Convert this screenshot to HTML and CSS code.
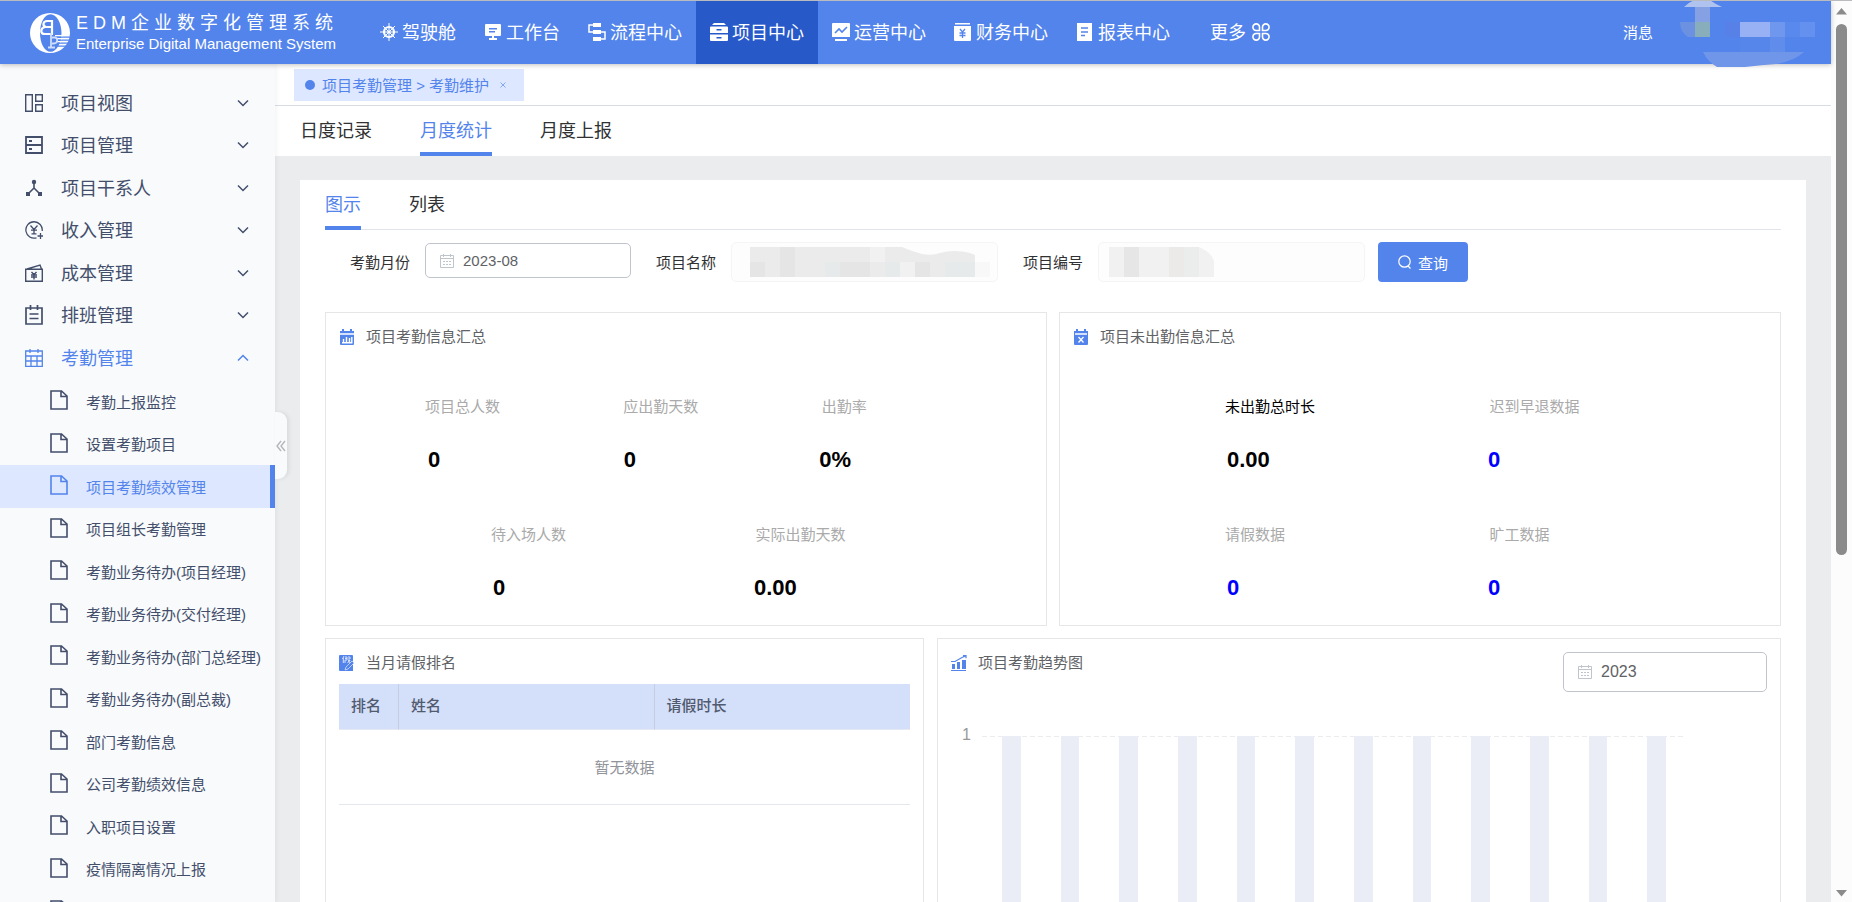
FILE: index.html
```html
<!DOCTYPE html>
<html lang="zh-CN">
<head>
<meta charset="utf-8">
<title>EDM企业数字化管理系统</title>
<link rel="stylesheet" href="styles.css">
</head>
<body>
<svg class="sprite" aria-hidden="true">
  <symbol id="doc" viewBox="0 0 18 20"><path d="M1 1h10.500L17 6v13H1z M11 1v5.500h6" fill="none" stroke="currentColor" stroke-width="1.600"/></symbol>
  <symbol id="down" viewBox="0 0 12 12"><path d="M1 3.500l5 5 5-5" fill="none" stroke="currentColor" stroke-width="1.500"/></symbol>
  <symbol id="cal" viewBox="0 0 14 14"><path d="M.5 1.500h13v12H.5z M.5 4.500h13 M3.500 0v3 M10.500 0v3" fill="none" stroke="currentColor"/><path d="M3 7.500h8 M3 10.500h8" stroke="currentColor" stroke-dasharray="2 1"/></symbol>
</svg>
<div class="app">
  <header class="topbar">
    <a class="brand" href="#">
      <svg class="logo" viewBox="0 0 40 40" aria-hidden="true">
        <path fill="#fff" fill-rule="evenodd" d="M20 0a20 20 0 1 1 0 40a20 20 0 1 1 0-40z M20.500 1.200c-6 0-10.500 8.500-10.500 18.800s4.500 18.800 10.500 18.800S31.500 30.300 31.500 20 26.500 1.200 20.500 1.200z"/>
        <path stroke="#5384ec" stroke-width="1.300" d="M31 24.200h9M30 27.200h10M29 30.200h9M28 33.200h8"/>
        <path stroke="#fff" stroke-width="1.200" d="M25 22.700h8M26 25.700h6M26 28.700h5"/>
        <path fill="none" stroke="#fff" stroke-width="2.200" d="M22 7v14M23 8h-6c-4 0-5 5-1 6h6M15 14c-5 1-5 7 0 7h8"/>
        <path fill="none" stroke="#cfdefb" stroke-width="1.800" d="M21 20v14M18 34.500h7M22 24.500h3c3 0 3 6-1 6h-2"/>
      </svg>
      <span class="brand-text">
        <span class="brand-cn">EDM企业数字化管理系统</span>
        <span class="brand-en">Enterprise Digital Management System</span>
      </span>
    </a>
    <nav class="nav">
      <a href="#"><svg viewBox="0 0 18 18"><circle cx="9" cy="9" r="5" fill="none" stroke="#fff" stroke-width="2.200"/><circle cx="9" cy="9" r="1.600" fill="#fff"/><path stroke="#fff" d="M9 0v18M0 9h18M3 3l12 12M15 3L3 15" stroke-width="1"/></svg>驾驶舱</a>
      <a href="#"><svg viewBox="0 0 18 18"><path fill="#fff" fill-rule="evenodd" d="M2 1h14q1 0 1 1v10q0 1-1 1h-6v2h3v2H5v-2h3v-2H2q-1 0-1-1V2q0-1 1-1z M5 5v1.500h8V5z M5 8v1.500h6V8z"/></svg>工作台</a>
      <a href="#"><svg viewBox="0 0 18 18"><path fill="#fff" d="M5 0h8v4H5zM5 7h8v4H5zM5 14h8v4H5z"/><path fill="none" stroke="#fff" stroke-width="1.500" d="M5 2H1v7h4M13 9h4v7h-4"/></svg>流程中心</a>
      <a href="#" class="active"><svg viewBox="0 0 18 18"><path fill="#fff" fill-rule="evenodd" d="M4 0h10l2 2H2z M1 3.500h16q1 0 1 1V10H0V4.500q0-1 1-1z M6.500 6v1.500h5V6z M0 11.500h18V17q0 1-1 1H1q-1 0-1-1z M6.500 14v1.500h5V14z"/></svg>项目中心</a>
      <a href="#"><svg viewBox="0 0 18 18"><path fill="#fff" d="M1 0h16q1 0 1 1v13H0V1q0-1 1-1zM3 16h12v2H3z"/><path fill="none" stroke="#5384ec" stroke-width="1.600" d="M3 10l4-4 3 3 5-5"/></svg>运营中心</a>
      <a href="#"><svg viewBox="0 0 18 18"><path fill="#fff" d="M1 0h15v1.500H1zM0 3h17v14q0 1-1 1H1q-1 0-1-1z"/><path fill="none" stroke="#5384ec" stroke-width="1.300" d="M6 6l2.500 3L11 6M8.500 9v6M5.500 10h6M5.500 12.500h6"/></svg>财务中心</a>
      <a href="#"><svg viewBox="0 0 18 18"><path fill="#fff" d="M1 0h15v18H1z"/><path stroke="#5384ec" stroke-width="1.400" d="M5 5h7M5 9h7M5 12.500h4"/></svg>报表中心</a>
      <a href="#" class="more">更多<svg viewBox="0 0 18 18"><path fill="none" stroke="#fff" stroke-width="1.600" d="M7.500 7.500H4.300A3.300 3.300 0 1 1 7.500 4.300zM10.500 7.500h3.200a3.300 3.300 0 1 0-3.200-3.200zM7.500 10.500H4.300a3.300 3.300 0 1 0 3.200 3.200zM10.500 10.500h3.200a3.300 3.300 0 1 1-3.200 3.200z"/></svg></a>
    </nav>
    <a class="msg" href="#">消息</a>
    <svg class="user" viewBox="0 0 138 68" role="img" aria-label="用户">
      <path fill="#b0c3ee" d="M4 7q6-6 12-7h14q5 4 12 7z"/>
      <path fill="#85a0e3" d="M15 7h15v15H15z"/><path fill="#6c91e0" d="M0 22h15v15H8Q0 32 0 22z"/><path fill="#88aebb" d="M15 22h15v15H15z"/>
      <path fill="#5781e6" d="M45 22h15v15H45z"/><path fill="#97b1f4" d="M60 22h30v15H60z"/><path fill="#7097ee" d="M90 22h15v15H90z"/><path fill="#5a89ee" d="M105 22h15v15h-15z"/><path fill="#6491ef" d="M120 22h15v15h-15z"/>
      <path fill="#5786eb" d="M60 37h30v15H60z"/><path fill="#608dec" d="M90 37h15v15H90z"/>
      <path fill="#7096ea" d="M23 52h101q-10 9-28 12-14 1-31 3H37q-9-5-14-15z"/>
    </svg>
  </header>
  <div class="body">
    <aside class="side">
      <ul class="menu">
        <li><a href="#"><svg viewBox="0 0 18 18"><path fill="none" stroke="currentColor" stroke-width="1.400" d="M.7.7h6.600v16.600H.7zM10.700.7h6.600v6.600h-6.600zM10.700 10.700h6.600v6.600h-6.600z"/></svg><span>项目视图</span><svg class="chev"><use href="#down"/></svg></a></li>
        <li><a href="#"><svg viewBox="0 0 18 18"><path fill="none" stroke="currentColor" stroke-width="1.800" d="M1 1h16v16H1zM1 9h16M4 5h3M4 13h3"/></svg><span>项目管理</span><svg class="chev"><use href="#down"/></svg></a></li>
        <li><a href="#"><svg viewBox="0 0 18 18"><path fill="none" stroke="currentColor" stroke-width="1.600" d="M9 3v6L3 15M9 9l6 6"/><circle cx="9" cy="3" r="2.200" fill="currentColor"/><path fill="currentColor" d="M1 13h4v4H1zM13 13h4v4h-4z"/></svg><span>项目干系人</span><svg class="chev"><use href="#down"/></svg></a></li>
        <li><a href="#"><svg viewBox="0 0 18 18"><path fill="none" stroke="currentColor" stroke-width="1.300" d="M11.500 16.800A8.200 8.200 0 1 1 17.200 10M5.500 4.500l3.500 4 3.500-4M9 8.500V13M6 9.200h6M6.500 12.800h5M15.500 12v6M12.500 15H18"/></svg><span>收入管理</span><svg class="chev"><use href="#down"/></svg></a></li>
        <li><a href="#"><svg viewBox="0 0 18 18"><path fill="none" stroke="currentColor" stroke-width="1.400" d="M.7 5.200h16.600v12H.7zM2 5L15 1l1.500 4M6.500 8L9 10.500 11.500 8M9 10.500v5M6 11h6M6 13h6"/></svg><span>成本管理</span><svg class="chev"><use href="#down"/></svg></a></li>
        <li><a href="#"><svg viewBox="0 0 18 20"><path fill="none" stroke="currentColor" stroke-width="1.700" d="M1 3h16v16H1zM5.500 0v5M12.500 0v5M4.500 9h9M4.500 13.500h9"/></svg><span>排班管理</span><svg class="chev"><use href="#down"/></svg></a></li>
        <li class="open"><a href="#"><svg viewBox="0 0 18 18"><path fill="none" stroke="currentColor" stroke-width="1.300" d="M.7 2h16.600v15.300H.7zM.7 7h16.600M.7 12h16.600M6 7v10M12 7v10M5 0v4M13 0v4"/></svg><span>考勤管理</span><svg class="chev"><use href="#down"/></svg></a></li>
      </ul>
      <ul class="submenu">
        <li><a href="#"><svg><use href="#doc"/></svg><span>考勤上报监控</span></a></li>
        <li><a href="#"><svg><use href="#doc"/></svg><span>设置考勤项目</span></a></li>
        <li class="current"><a href="#"><svg><use href="#doc"/></svg><span>项目考勤绩效管理</span></a></li>
        <li><a href="#"><svg><use href="#doc"/></svg><span>项目组长考勤管理</span></a></li>
        <li><a href="#"><svg><use href="#doc"/></svg><span>考勤业务待办(项目经理)</span></a></li>
        <li><a href="#"><svg><use href="#doc"/></svg><span>考勤业务待办(交付经理)</span></a></li>
        <li><a href="#"><svg><use href="#doc"/></svg><span>考勤业务待办(部门总经理)</span></a></li>
        <li><a href="#"><svg><use href="#doc"/></svg><span>考勤业务待办(副总裁)</span></a></li>
        <li><a href="#"><svg><use href="#doc"/></svg><span>部门考勤信息</span></a></li>
        <li><a href="#"><svg><use href="#doc"/></svg><span>公司考勤绩效信息</span></a></li>
        <li><a href="#"><svg><use href="#doc"/></svg><span>入职项目设置</span></a></li>
        <li><a href="#"><svg><use href="#doc"/></svg><span>疫情隔离情况上报</span></a></li>
        <li><a href="#" aria-label="更多"><svg><use href="#doc"/></svg></a></li>
      </ul>
      <button class="fold" aria-label="收起菜单"><svg viewBox="0 0 10 12"><path d="M5 1L1 6l4 5M9 1L5 6l4 5" fill="none" stroke="#b4b6ba" stroke-width="1.400"/></svg></button>
    </aside>
    <main class="main">
      <div class="tags"><a class="tag" href="#"><i class="dot"></i><span>项目考勤管理 &gt; 考勤维护</span><svg viewBox="0 0 6 6"><path d="M.5.5l5 5M5.500.5l-5 5" stroke="#7a9ff0" stroke-width=".9"/></svg></a></div>
      <nav class="tabs"><a href="#">日度记录</a><a href="#" class="on">月度统计</a><a href="#">月度上报</a></nav>
      <section class="card">
        <nav class="tabs inner"><a href="#" class="on">图示</a><a href="#">列表</a></nav>
        <form class="filters">
          <label for="month">考勤月份</label>
          <div class="date month"><svg><use href="#cal"/></svg><input id="month" value="2023-08"></div>
          <label for="pname">项目名称</label>
          <div class="masked">
            <input id="pname" disabled>
            <svg class="mask" viewBox="0 0 240 30" width="240" height="30" aria-hidden="true">
              <path fill="#ebebeb" d="M0 0h152q12 5 20 7 10 2 18-1 14-4 30 0l5 2v22H0z"/>
              <path fill="#e5e5e5" d="M0 15h15v15H0zM30 0h15v30H30zM90 15h30v15H90zM165 15h15v15h-15z"/>
              <path fill="#e7eaea" d="M75 15h15v15H75zM135 15h15v15h-15zM195 15h30v15h-30z"/>
              <path fill="#f1f1f1" d="M120 0h15v15h-15zM150 15h15v15h-15z"/><path fill="#f8f8f8" d="M225 15h15v15h-15z"/>
            </svg>
          </div>
          <label for="pcode">项目编号</label>
          <div class="masked">
            <input id="pcode" disabled>
            <svg class="mask" viewBox="0 0 105 30" width="105" height="30" aria-hidden="true">
              <path fill="#f1f1f1" d="M0 0h90q12 5 15 14v16H0z"/><path fill="#e6e6e6" d="M15 0h15v30H15z"/><path fill="#ebeae8" d="M60 0h15v30H60z"/><path fill="#ebecec" d="M75 0h15v30H75z"/>
            </svg>
          </div>
          <button class="search" type="button"><svg viewBox="0 0 14 14"><circle cx="6.500" cy="6.500" r="5.700" fill="none" stroke="#fff" stroke-width="1.200"/><path d="M10 11l2.500 2.500" stroke="#fff" stroke-width="1.200"/></svg>查询</button>
        </form>
        <div class="row halves">
          <section class="panel">
            <h2><svg viewBox="0 0 16 16"><path fill="#5384ec" d="M1 2h14v13q0 1-1 1H2q-1 0-1-1zM3 0h2v3H3zM11 0h2v3h-2z"/><path stroke="#fff" stroke-width="1.400" d="M1 5h14M4.500 13v-3M7.500 13V8M10.500 13V9M12.800 13V8M3 13.700h10.500" /></svg>项目考勤信息汇总</h2>
            <div class="stats">
              <div class="labels three"><span>项目总人数</span><span>应出勤天数</span><span>出勤率</span></div>
              <div class="values three"><b>0</b><b>0</b><b>0%</b></div>
              <div class="labels two"><span>待入场人数</span><span>实际出勤天数</span></div>
              <div class="values two"><b>0</b><b>0.00</b></div>
            </div>
          </section>
          <section class="panel">
            <h2><svg viewBox="0 0 16 16"><path fill="#5384ec" d="M1 2h14v13q0 1-1 1H2q-1 0-1-1zM3 0h2v3H3zM11 0h2v3h-2z"/><path stroke="#fff" stroke-width="1.300" d="M2 5h12M5.500 8l5 5.500M10.500 8l-5 5.500"/></svg>项目未出勤信息汇总</h2>
            <div class="stats">
              <div class="labels two"><span class="strong">未出勤总时长</span><span>迟到早退数据</span></div>
              <div class="values two"><b>0.00</b><a href="#">0</a></div>
              <div class="labels two"><span>请假数据</span><span>旷工数据</span></div>
              <div class="values two"><a href="#">0</a><a href="#">0</a></div>
            </div>
          </section>
        </div>
        <div class="row split">
          <section class="panel">
            <h2><svg viewBox="0 0 16 16"><path fill="#5384ec" d="M1 0h12q1 0 1 1v15H1q-1 0-1-1V1q0-1 1-1z"/><path fill="none" stroke="#d5e1fb" d="M5 1L3.500 4M4.300 3v5M6 2h2v3H6v3M6 3.500h2M9 2h2v2H9M9 5.500h2L8.500 8M9 6l2.500 2"/><path fill="#5384ec" stroke="#c3d4f9" stroke-width=".9" d="M6 15l1-3 6-6 2 2-6 6z"/></svg>当月请假排名</h2>
            <table class="rank">
              <colgroup><col class="c1"><col><col></colgroup>
              <thead><tr><th>排名</th><th>姓名</th><th>请假时长</th></tr></thead>
              <tbody><tr><td colspan="3">暂无数据</td></tr></tbody>
            </table>
          </section>
          <section class="panel trend">
            <div class="trend-head">
              <h2><svg viewBox="0 0 16 16"><path fill="#5384ec" d="M1 9h3v5H1zM6 7h3v7H6zM11 5h4v9h-4zM0 15h15v1H0z"/><path fill="none" stroke="#5384ec" stroke-width="1.200" d="M0 6.500h4l7-4L14.500 1M12 .7h3v2.500"/></svg>项目考勤趋势图</h2>
              <div class="date year"><svg><use href="#cal"/></svg><input aria-label="年份" value="2023"></div>
            </div>
            <div class="chart">
              <span class="axis">1</span>
              <div class="plot"><i></i><i></i><i></i><i></i><i></i><i></i><i></i><i></i><i></i><i></i><i></i><i></i></div>
            </div>
          </section>
        </div>
      </section>
    </main>
  </div>
</div>
<div class="scroll" aria-hidden="true">
  <svg viewBox="0 0 11 8"><path d="M5.500 0L11 6.500H0z" fill="#8b8b8b"/></svg>
  <div class="track"><div class="thumb"></div></div>
  <svg viewBox="0 0 11 8"><path d="M5.500 7.500L11 1H0z" fill="#8b8b8b"/></svg>
</div>
</body>
</html>
```
FILE: styles.css
```css
* { box-sizing: border-box; }
body {
  margin: 0;
  height: 100vh;
  overflow: hidden;
  display: flex;
  font-family: "Liberation Sans", "Noto Sans CJK SC", sans-serif;
  font-size: 15px;
  color: #303133;
  background: #fff;
  border-top: 1px solid #b9bbbf;
}
a { color: inherit; text-decoration: none; }
ul { list-style: none; margin: 0; padding: 0; }
input, button { font: inherit; color: inherit; }
svg { flex: none; display: block; }
.sprite { display: none; }
.app { flex: 1; min-width: 0; display: flex; flex-direction: column; }

/* top bar */
.topbar {
  position: relative;
  z-index: 3;
  flex: none;
  height: 63px;
  display: flex;
  align-items: center;
  background: #5384ec;
  color: #fff;
  box-shadow: 0 1px 5px rgba(0, 0, 0, .25);
}
.brand { display: flex; align-items: center; gap: 6px; width: 366px; padding-left: 30px; }
.logo { width: 40px; height: 40px; }
.brand-text { display: flex; flex-direction: column; white-space: nowrap; }
.brand-cn { font-size: 18px; line-height: 22px; letter-spacing: 5px; }
.brand-en { font-size: 15px; line-height: 20px; }
.nav { display: flex; align-self: stretch; font-size: 18px; }
.nav a { display: flex; align-items: center; gap: 4px; padding: 0 14px 3px; white-space: nowrap; }
.nav svg { width: 18px; height: 18px; margin-top: 2px; }
.nav .active { background: #2759c9; }
.nav .more { margin-left: 12px; gap: 6px; }
.msg { margin-left: auto; padding-bottom: 2px; }
.user { align-self: flex-start; width: 138px; height: 68px; margin: -1px 13px 0 27px; }

.body { flex: 1; min-height: 0; display: flex; }

/* side menu */
.side {
  position: relative;
  z-index: 2;
  width: 275px;
  flex: none;
  padding-top: 17px;
  background: #f8fafc;
  color: #434e6b;
  box-shadow: 1px 0 5px rgba(0, 0, 0, .06);
}
.menu li:nth-child(odd), .submenu li:nth-child(odd) { height: 43px; }
.menu li:nth-child(even), .submenu li:nth-child(even) { height: 42px; }
.menu a { height: 100%; display: flex; align-items: center; gap: 18px; padding: 0 26px 0 25px; font-size: 18px; }
.menu a svg { width: 18px; height: 20px; }
.menu span { flex: 1; padding-bottom: 2px; }
.menu a .chev { width: 12px; height: 12px; }
.open { color: #5384ec; }
.open .chev { transform: rotate(180deg); }
.submenu { padding-top: 1px; }
.submenu a { height: 100%; display: flex; align-items: center; gap: 18px; padding-left: 50px; white-space: nowrap; }
.submenu svg { width: 18px; height: 20px; margin-bottom: 3px; }
.submenu span { padding-bottom: 1px; }
.submenu .current { background: #dde7ff; color: #5384ec; border-right: 5px solid #5384ec; }
.fold {
  position: absolute;
  left: 100%;
  top: 348px;
  width: 12px;
  height: 67px;
  padding: 0;
  border: 0;
  border-radius: 0 9px 9px 0;
  background: #f8fafc;
  box-shadow: 2px 0 4px rgba(0, 0, 0, .08);
}
.fold svg { width: 10px; height: 12px; margin-left: 1px; }

/* main area */
.main { flex: 1; min-width: 0; overflow: hidden; background: #ebecee; }
.tags { display: flex; padding: 5px 19px 4px; background: #fff; border-bottom: 1px solid #d8dce5; }
.tag { display: flex; align-items: center; gap: 7px; height: 32px; padding: 0 18px 0 11px; background: #dde7ff; color: #5384ec; }
.tag span { padding-bottom: 2px; }
.tag svg { width: 6px; height: 6px; margin-left: 4px; }
.dot { width: 10px; height: 10px; border-radius: 50%; background: #5384ec; }
.tabs { display: flex; gap: 48px; padding-left: 25px; font-size: 18px; background: #fff; }
.tabs a { line-height: 42px; padding-top: 4px; border-bottom: 4px solid transparent; }
.tabs .on { color: #5384ec; border-bottom-color: #5384ec; }
.card { margin: 24px 25px 0; padding: 0 25px; background: #fff; }
.tabs.inner { padding-left: 0; box-shadow: inset 0 -1px #e1e4ea; }

.filters { display: flex; align-items: center; gap: 15px; padding: 12px 0 30px 25px; }
.filters label { padding-bottom: 2px; }
.filters .month, .filters .masked { margin-right: 10px; }
.filters .month { margin-bottom: 3px; }
.filters .masked + .search { margin-left: -12px; }
.date { display: flex; align-items: center; gap: 9px; padding-left: 14px; border: 1px solid #c0c4cc; border-radius: 5px; color: #606266; }
.date svg { width: 14px; height: 14px; color: #c0c4cc; }
.date input { flex: 1; min-width: 0; padding: 0; border: 0; outline: 0; background: none; }
.month { width: 206px; height: 35px; }
.year { width: 204px; height: 40px; font-size: 16px; }
.masked { position: relative; width: 267px; height: 40px; }
.masked input { width: 100%; height: 100%; border: 1px solid #f5f5f6; border-radius: 5px; background: #fdfdfd; }
.mask { position: absolute; left: 19px; top: 5px; }
.masked + label + .masked .mask { left: 11px; }
.search { display: flex; align-items: center; justify-content: center; gap: 6px; width: 90px; height: 40px; padding: 0; border: 0; border-radius: 4px; background: #5384ec; color: #fff; }
.search svg { width: 14px; height: 14px; }

/* panels */
.row { display: grid; gap: 12px; margin-bottom: 12px; }
.halves { grid-template-columns: 1fr 1fr; }
.split { grid-template-columns: 599fr 844fr; gap: 13px; }
.panel { min-width: 0; border: 1px solid #e6e6e9; }
.panel h2 { display: flex; align-items: center; gap: 11px; margin: 0; padding: 3px 13px 0; font-size: 15px; line-height: 42px; font-weight: 400; color: #606266; }
.panel h2 svg { width: 16px; height: 16px; }
.stats { padding: 34px 0 22px; line-height: 30px; }
.labels, .values { display: grid; }
.labels { padding-right: 26px; color: #aaa; }
.values { padding-right: 31px; margin-top: 23px; font-size: 22px; font-weight: 700; color: #000; }
.values + .labels { margin-top: 45px; }
.three { grid-template-columns: repeat(3, minmax(0, 1fr)); }
.two { grid-template-columns: repeat(2, minmax(0, 1fr)); }
.labels.three { padding-left: 99px; }
.values.three { padding-left: 102px; }
.labels.two { padding-left: 165px; }
.values.two { padding-left: 167px; }
.values a { color: #00f; }
.strong { color: #000; }

.rank { width: calc(100% - 26px); margin: 0 13px; border-collapse: separate; border-spacing: 0; table-layout: fixed; }
.rank .c1 { width: 60px; }
.rank th { height: 46px; padding: 0 12px 4px; text-align: left; font-weight: 500; color: #515a6e; background: #d4dffa; border-right: 1px solid #c5cde0; border-bottom: 1px solid #e6e9f4; }
.rank th:last-child { border-right: 0; }
.rank td { height: 75px; padding: 0 0 2px; text-align: center; color: #909399; border-bottom: 1px solid #e4e7f0; }

.trend-head { display: flex; justify-content: space-between; align-items: flex-start; padding-right: 13px; }
.trend-head .date { margin-top: 13px; }
.chart { display: flex; gap: 11px; padding: 44px 94px 0 25px; color: #999; }
.axis { line-height: 20px; margin-top: -11px; font-size: 16px; width: 8px; display: flex; justify-content: flex-end; }
.plot { flex: 1; height: 280px; display: grid; grid-template-columns: repeat(12, 1fr); justify-items: center; background: repeating-linear-gradient(90deg, #ececef 0 5px, transparent 5px 8px) top / 100% 1px no-repeat; }
.plot i { width: 32%; background: #eaedf5; }

/* scroll bar */
.scroll { flex: none; width: 21px; display: flex; flex-direction: column; align-items: center; gap: 8px; padding: 7px 0 5px; background: #fcfcfc; }
.scroll svg { width: 11px; height: 8px; }
.track { flex: 1; width: 11px; }
.thumb { height: 62%; border-radius: 6px; background: #8b8b8b; }
```
